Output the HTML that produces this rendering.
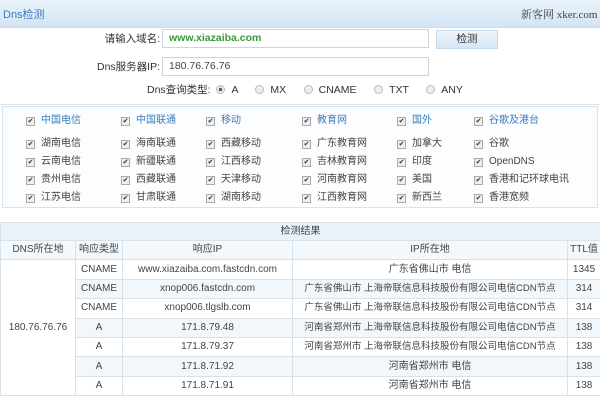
<!DOCTYPE html>
<html><head><meta charset="utf-8"><style>
*{margin:0;padding:0;box-sizing:border-box}
body{width:600px;height:400px;overflow:hidden;background:#fff;font-family:"Liberation Sans","Noto Sans CJK SC",sans-serif;font-size:11px;color:#333;position:relative}
.a{position:absolute;line-height:14px}
.hdr{left:0;top:0;width:600px;height:28px;background:linear-gradient(#eaf3fb,#d2e5f4);border-bottom:1px solid #c9dcec}
.lbl{text-align:right;font-size:10.5px;color:#333}
.inp{border:1px solid #c9d6e0;background:#fff;height:19px;padding-left:6px;line-height:17px;font-size:10.5px}
.btn{background:linear-gradient(#eef5fb,#d5e6f3);border:1px solid #c9dcec;text-align:center;line-height:17px;font-size:10.5px}
.rad{display:inline-block;width:9px;height:9px;border:1px solid #bbb;border-radius:50%;background:#eee;vertical-align:-1px;margin-right:6px}
.panel{left:2px;top:106px;width:596px;height:102px;background:#fbfdff;border:1px solid #d6e4ef}
.cb{position:absolute;font-size:10px;color:#444;white-space:nowrap;display:flex;align-items:center;height:12px;line-height:12px}
.cb i{display:inline-block;width:9px;height:9px;border:1px solid #aaa;background:#eee;margin-right:6px;font-style:normal;font-size:7px;line-height:7px;text-align:center;color:#333}
.bl{color:#3a7cc0}
table{position:absolute;left:0;top:222px;width:600px;border-collapse:collapse;font-size:10px;color:#444;table-layout:fixed}
td{border:1px solid #d6e2ec;text-align:center;height:19.4px;padding:0;white-space:nowrap;overflow:hidden;line-height:12px}
tr.t td{background:#eaf2f9;height:18px}
tr.h td{background:#f3f8fc}
tr.z td{background:#f2f7fc}
.sm{font-size:9.5px}
</style></head><body>
<div class="a hdr"></div>
<div class="a" style="left:3px;top:8px;color:#3a7cc0;font-size:11px">Dns检测</div>
<div class="a" style="left:521px;top:8px;font-family:'Liberation Serif','Noto Serif CJK SC',serif;font-size:11px;color:#444">新客网 xker.com</div>
<div class="a lbl" style="left:60px;top:32px;width:100px">请输入域名:</div>
<div class="a inp" style="left:162px;top:29px;width:267px;color:#3a9a3a;font-weight:bold">www.xiazaiba.com</div>
<div class="a btn" style="left:436px;top:30px;width:62px;height:19px">检测</div>
<div class="a lbl" style="left:50px;top:60px;width:110px">Dns服务器IP:</div>
<div class="a inp" style="left:162px;top:57px;width:267px;color:#444">180.76.76.76</div>
<div class="a" style="left:147px;top:83px;font-size:10.5px;white-space:nowrap">Dns查询类型: &nbsp;<span class="rad" style="background:radial-gradient(#555 30%,#eee 40%)"></span>A &nbsp; &nbsp; &nbsp;<span class="rad"></span>MX &nbsp; &nbsp; &nbsp;<span class="rad"></span>CNAME &nbsp; &nbsp; &nbsp;<span class="rad"></span>TXT &nbsp; &nbsp; &nbsp;<span class="rad"></span>ANY</div>
<div class="a" style="left:0;top:104px;width:600px;height:1px;background:#d6e4ef"></div>
<div class="a panel">
<div class="cb bl" style="left:23px;top:8px"><i>✔</i>中国电信</div>
<div class="cb bl" style="left:118px;top:8px"><i>✔</i>中国联通</div>
<div class="cb bl" style="left:203px;top:8px"><i>✔</i>移动</div>
<div class="cb bl" style="left:299px;top:8px"><i>✔</i>教育网</div>
<div class="cb bl" style="left:394px;top:8px"><i>✔</i>国外</div>
<div class="cb bl" style="left:471px;top:8px"><i>✔</i>谷歌及港台</div>

<div class="cb" style="left:23px;top:31px"><i>✔</i>湖南电信</div>
<div class="cb" style="left:118px;top:31px"><i>✔</i>海南联通</div>
<div class="cb" style="left:203px;top:31px"><i>✔</i>西藏移动</div>
<div class="cb" style="left:299px;top:31px"><i>✔</i>广东教育网</div>
<div class="cb" style="left:394px;top:31px"><i>✔</i>加拿大</div>
<div class="cb" style="left:471px;top:31px"><i>✔</i>谷歌</div>

<div class="cb" style="left:23px;top:49px"><i>✔</i>云南电信</div>
<div class="cb" style="left:118px;top:49px"><i>✔</i>新疆联通</div>
<div class="cb" style="left:203px;top:49px"><i>✔</i>江西移动</div>
<div class="cb" style="left:299px;top:49px"><i>✔</i>吉林教育网</div>
<div class="cb" style="left:394px;top:49px"><i>✔</i>印度</div>
<div class="cb" style="left:471px;top:49px"><i>✔</i>OpenDNS</div>

<div class="cb" style="left:23px;top:67px"><i>✔</i>贵州电信</div>
<div class="cb" style="left:118px;top:67px"><i>✔</i>西藏联通</div>
<div class="cb" style="left:203px;top:67px"><i>✔</i>天津移动</div>
<div class="cb" style="left:299px;top:67px"><i>✔</i>河南教育网</div>
<div class="cb" style="left:394px;top:67px"><i>✔</i>美国</div>
<div class="cb" style="left:471px;top:67px"><i>✔</i>香港和记环球电讯</div>

<div class="cb" style="left:23px;top:85px"><i>✔</i>江苏电信</div>
<div class="cb" style="left:118px;top:85px"><i>✔</i>甘肃联通</div>
<div class="cb" style="left:203px;top:85px"><i>✔</i>湖南移动</div>
<div class="cb" style="left:299px;top:85px"><i>✔</i>江西教育网</div>
<div class="cb" style="left:394px;top:85px"><i>✔</i>新西兰</div>
<div class="cb" style="left:471px;top:85px"><i>✔</i>香港宽频</div>
</div>
<table>
<colgroup><col style="width:75px"><col style="width:47px"><col style="width:170px"><col style="width:275px"><col style="width:33px"></colgroup>
<tr class="t"><td colspan="5">检测结果</td></tr>
<tr class="h"><td>DNS所在地</td><td>响应类型</td><td>响应IP</td><td>IP所在地</td><td>TTL值</td></tr>
<tr><td rowspan="7" style="background:#fff">180.76.76.76</td><td>CNAME</td><td>www.xiazaiba.com.fastcdn.com</td><td>广东省佛山市 电信</td><td>1345</td></tr>
<tr class="z"><td>CNAME</td><td>xnop006.fastcdn.com</td><td class="sm">广东省佛山市 上海帝联信息科技股份有限公司电信CDN节点</td><td>314</td></tr>
<tr><td>CNAME</td><td>xnop006.tlgslb.com</td><td class="sm">广东省佛山市 上海帝联信息科技股份有限公司电信CDN节点</td><td>314</td></tr>
<tr class="z"><td>A</td><td>171.8.79.48</td><td class="sm">河南省郑州市 上海帝联信息科技股份有限公司电信CDN节点</td><td>138</td></tr>
<tr><td>A</td><td>171.8.79.37</td><td class="sm">河南省郑州市 上海帝联信息科技股份有限公司电信CDN节点</td><td>138</td></tr>
<tr class="z"><td>A</td><td>171.8.71.92</td><td>河南省郑州市 电信</td><td>138</td></tr>
<tr><td>A</td><td>171.8.71.91</td><td>河南省郑州市 电信</td><td>138</td></tr>
</table>
</body></html>
